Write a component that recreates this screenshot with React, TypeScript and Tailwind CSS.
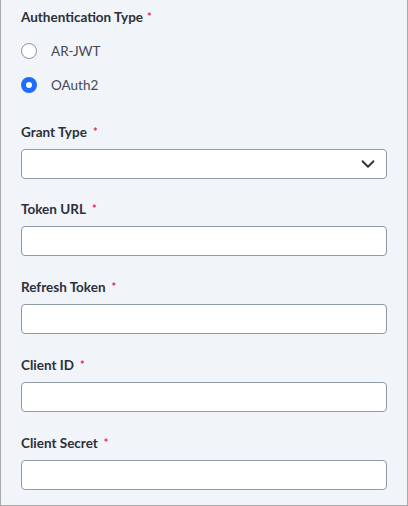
import { ChevronDown } from "lucide-react";

function Label({ text }: { text: string }) {
  return (
    <div className="flex h-[18px] items-center gap-[6px] text-[13.5px] font-bold leading-[18px] text-[#2b303b]">
      <span>{text}</span>
      <span className="text-[11px] text-[#e8285a]">*</span>
    </div>
  );
}

function Field({ label }: { label: string }) {
  return (
    <div className="flex flex-col gap-[8px]">
      <Label text={label} />
      <input
        type="text"
        className="h-[30px] w-full rounded-[4px] border border-[#8f9aa5] bg-white px-2 text-[13px] outline-none"
      />
    </div>
  );
}

function Radio({ label, checked }: { label: string; checked?: boolean }) {
  return (
    <label className="flex h-[16px] items-center gap-[14px] text-[13.5px] leading-[16px] text-[#444a55]">
      {checked ? (
        <span className="h-[16px] w-[16px] shrink-0 rounded-full border-[5px] border-[#1f6bff] bg-white" />
      ) : (
        <span className="h-[16px] w-[16px] shrink-0 rounded-full border border-[#8e949c] bg-white" />
      )}
      <span>{label}</span>
    </label>
  );
}

export default function App() {
  return (
    <div
      className="h-[506px] w-[408px] border-x border-b border-[#a9a9a9] bg-[#f1f4f8] px-[20px] pt-[8px]"
      style={{ fontFamily: "Lato, 'Noto Sans', sans-serif" }}
    >
      <div className="flex h-[18px] items-center gap-[4px] text-[13.5px] font-bold leading-[18px] text-[#2b303b]">
        <span>Authentication Type</span>
        <span className="text-[11px] text-[#e8285a]">*</span>
      </div>
      <div className="mt-[17px] flex flex-col gap-[18px]">
        <Radio label="AR-JWT" />
        <Radio label="OAuth2" checked />
      </div>

      <div className="mt-[30px] flex flex-col gap-[8px]">
        <Label text="Grant Type" />
        <div className="flex h-[30px] w-full items-center justify-end rounded-[4px] border border-[#8f9aa5] bg-white pr-[7px]">
          <ChevronDown className="h-[22px] w-[22px] text-[#2b303b]" strokeWidth={2} />
        </div>
      </div>

      <div className="mt-[21px] flex flex-col gap-[22px]">
        <Field label="Token URL" />
        <Field label="Refresh Token" />
        <Field label="Client ID" />
        <Field label="Client Secret" />
      </div>
    </div>
  );
}
